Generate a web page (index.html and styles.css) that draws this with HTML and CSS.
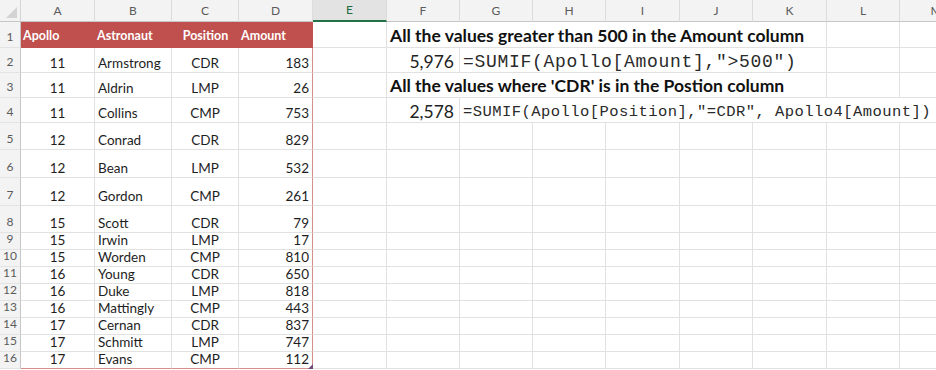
FILE: index.html
```html
<!DOCTYPE html>
<html>
<head>
<meta charset="utf-8">
<link rel="stylesheet" href="styles.css">
</head>
<body>
<div class="sheet">
  <div class="c corner"></div>
  <div class="c ch">A</div><div class="c ch">B</div><div class="c ch">C</div><div class="c ch">D</div>
  <div class="c ch sel">E</div><div class="c ch">F</div><div class="c ch">G</div><div class="c ch">H</div>
  <div class="c ch">I</div><div class="c ch">J</div><div class="c ch">K</div><div class="c ch">L</div><div class="c ch">M</div>

  <div class="c rh">1</div>
  <div class="c hd">Apollo</div><div class="c hd">Astronaut</div><div class="c hd ctr">Position</div><div class="c hd last">Amount</div>
  <div class="c"></div><div class="c heading span6">All the values greater than 500 in the Amount column</div><div class="c"></div><div class="c"></div>

  <div class="c rh">2</div>
  <div class="c ctr">11</div><div class="c">Armstrong</div><div class="c ctr">CDR</div><div class="c rt last">183</div>
  <div class="c"></div><div class="c rt num">5,976</div><div class="c formula big span5">=SUMIF(Apollo[Amount],"&gt;500")</div><div class="c"></div><div class="c"></div>

  <div class="c rh">3</div>
  <div class="c ctr">11</div><div class="c">Aldrin</div><div class="c ctr">LMP</div><div class="c rt last">26</div>
  <div class="c"></div><div class="c heading span6">All the values where 'CDR' is in the Postion column</div><div class="c"></div><div class="c"></div>

  <div class="c rh">4</div>
  <div class="c ctr">11</div><div class="c">Collins</div><div class="c ctr">CMP</div><div class="c rt last">753</div>
  <div class="c"></div><div class="c rt num">2,578</div><div class="c formula span7">=SUMIF(Apollo[Position],"=CDR", Apollo4[Amount])</div>

  <div class="c rh">5</div>
  <div class="c ctr">12</div><div class="c">Conrad</div><div class="c ctr">CDR</div><div class="c rt last">829</div>
  <div class="c"></div><div class="c"></div><div class="c"></div><div class="c"></div><div class="c"></div><div class="c"></div><div class="c"></div><div class="c"></div><div class="c"></div>

  <div class="c rh">6</div>
  <div class="c ctr">12</div><div class="c">Bean</div><div class="c ctr">LMP</div><div class="c rt last">532</div>
  <div class="c"></div><div class="c"></div><div class="c"></div><div class="c"></div><div class="c"></div><div class="c"></div><div class="c"></div><div class="c"></div><div class="c"></div>

  <div class="c rh">7</div>
  <div class="c ctr">12</div><div class="c">Gordon</div><div class="c ctr">CMP</div><div class="c rt last">261</div>
  <div class="c"></div><div class="c"></div><div class="c"></div><div class="c"></div><div class="c"></div><div class="c"></div><div class="c"></div><div class="c"></div><div class="c"></div>

  <div class="c rh">8</div>
  <div class="c ctr">15</div><div class="c">Scott</div><div class="c ctr">CDR</div><div class="c rt last">79</div>
  <div class="c"></div><div class="c"></div><div class="c"></div><div class="c"></div><div class="c"></div><div class="c"></div><div class="c"></div><div class="c"></div><div class="c"></div>

  <div class="c rh">9</div>
  <div class="c ctr">15</div><div class="c">Irwin</div><div class="c ctr">LMP</div><div class="c rt last">17</div>
  <div class="c"></div><div class="c"></div><div class="c"></div><div class="c"></div><div class="c"></div><div class="c"></div><div class="c"></div><div class="c"></div><div class="c"></div>

  <div class="c rh">10</div>
  <div class="c ctr">15</div><div class="c">Worden</div><div class="c ctr">CMP</div><div class="c rt last">810</div>
  <div class="c"></div><div class="c"></div><div class="c"></div><div class="c"></div><div class="c"></div><div class="c"></div><div class="c"></div><div class="c"></div><div class="c"></div>

  <div class="c rh">11</div>
  <div class="c ctr">16</div><div class="c">Young</div><div class="c ctr">CDR</div><div class="c rt last">650</div>
  <div class="c"></div><div class="c"></div><div class="c"></div><div class="c"></div><div class="c"></div><div class="c"></div><div class="c"></div><div class="c"></div><div class="c"></div>

  <div class="c rh">12</div>
  <div class="c ctr">16</div><div class="c">Duke</div><div class="c ctr">LMP</div><div class="c rt last">818</div>
  <div class="c"></div><div class="c"></div><div class="c"></div><div class="c"></div><div class="c"></div><div class="c"></div><div class="c"></div><div class="c"></div><div class="c"></div>

  <div class="c rh">13</div>
  <div class="c ctr">16</div><div class="c">Mattingly</div><div class="c ctr">CMP</div><div class="c rt last">443</div>
  <div class="c"></div><div class="c"></div><div class="c"></div><div class="c"></div><div class="c"></div><div class="c"></div><div class="c"></div><div class="c"></div><div class="c"></div>

  <div class="c rh">14</div>
  <div class="c ctr">17</div><div class="c">Cernan</div><div class="c ctr">CDR</div><div class="c rt last">837</div>
  <div class="c"></div><div class="c"></div><div class="c"></div><div class="c"></div><div class="c"></div><div class="c"></div><div class="c"></div><div class="c"></div><div class="c"></div>

  <div class="c rh">15</div>
  <div class="c ctr">17</div><div class="c">Schmitt</div><div class="c ctr">LMP</div><div class="c rt last">747</div>
  <div class="c"></div><div class="c"></div><div class="c"></div><div class="c"></div><div class="c"></div><div class="c"></div><div class="c"></div><div class="c"></div><div class="c"></div>

  <div class="c rh">16</div>
  <div class="c ctr bot">17</div><div class="c bot">Evans</div><div class="c ctr bot">CMP</div><div class="c rt last bot handle">112</div>
  <div class="c"></div><div class="c"></div><div class="c"></div><div class="c"></div><div class="c"></div><div class="c"></div><div class="c"></div><div class="c"></div><div class="c"></div>
</div>
</body>
</html>
```

FILE: styles.css
```css
html, body {
  margin: 0;
  padding: 0;
  background: #ffffff;
  overflow: hidden;
}

.sheet {
  display: grid;
  grid-template-columns: 21px 74px 77px 67px 74px 74px 73px 73px 73px 74px 73px 74px 73px 73px;
  grid-template-rows: 22px 26px 25px 25px 25px 27px 28px 28px 27px repeat(8, 17px);
  width: 936px;
  height: 370px;
  font-family: Lato, "Open Sans", sans-serif;
  font-size: 13.5px;
  color: #1e1e1e;
}

.c {
  box-sizing: border-box;
  border-right: 1px solid #e1e1e1;
  border-bottom: 1px solid #e1e1e1;
  display: flex;
  align-items: flex-end;
  padding: 0 3px 1px;
  white-space: nowrap;
  line-height: 16px;
  min-width: 0;
  position: relative;
}

.corner {
  background: #f3f3f3;
  border-right: 1px solid #d4d4d4;
  border-bottom: 1px solid #c6c6c6;
}
.corner::after {
  content: "";
  position: absolute;
  right: 3px;
  bottom: 3px;
  border-style: solid;
  border-width: 0 0 11px 11px;
  border-color: transparent transparent #d3d3d3 transparent;
}

.ch {
  background: #f3f3f3;
  border-right: 1px solid #dcdcdc;
  border-bottom: 1px solid #c6c6c6;
  justify-content: center;
  align-items: center;
  padding: 0;
  color: #5b5b5b;
  font-size: 12px;
}
.ch.sel {
  background: #e3e3e3;
  color: #1f6b43;
  border-bottom: 2px solid #217346;
}

.rh {
  background: #f3f3f3;
  border-right: 1px solid #c6c6c6;
  border-bottom: 1px solid #e3e3e3;
  justify-content: center;
  color: #5b5b5b;
  font-size: 12px;
  padding: 0 0 2px;
}

.hd {
  background: #c0504d;
  color: #ffffff;
  font-weight: bold;
  border-right: none;
  border-bottom: none;
  padding: 0 2px 4px;
  font-size: 12.5px;
}
.hd.ctr { justify-content: center; }
.hd.last { border-right: 1px solid #c0504d; }

.ctr { justify-content: center; }
.rt { justify-content: flex-end; }

.last { border-right: 1px solid #d48e8c; }
.bot { border-bottom: 1px solid #d48e8c; }

.handle::after {
  content: "";
  position: absolute;
  right: -1px;
  bottom: -1px;
  border-style: solid;
  border-width: 0 0 5px 5px;
  border-color: transparent transparent #6a4d7a transparent;
}

.heading {
  font-weight: bold;
  font-size: 17.5px;
  color: #111111;
  line-height: 20px;
  padding: 0 3px 1px;
}

.num {
  font-size: 17.5px;
  line-height: 20px;
  color: #222222;
  padding: 0 5px 0;
}

.formula {
  font-family: "Liberation Mono", monospace;
  font-size: 15.5px;
  letter-spacing: 0.45px;
  line-height: 20px;
  color: #2a2a2a;
  padding: 0 3px 0;
}
.formula.big {
  font-size: 18px;
  letter-spacing: 0.7px;
}

.span5 { grid-column: span 5; }
.span6 { grid-column: span 6; }
.span7 { grid-column: span 7; }
```
